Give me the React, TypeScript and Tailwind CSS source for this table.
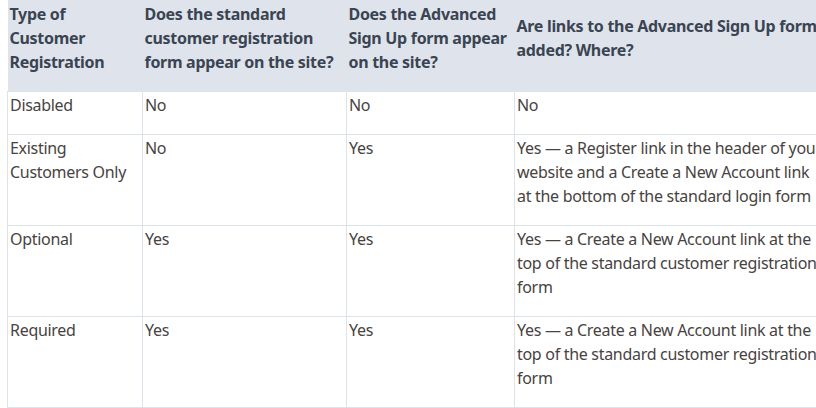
import React from 'react';

const rows = [
  { type: ['Disabled'], standard: 'No', advanced: 'No', links: 'No' },
  {
    type: ['Existing', 'Customers Only'],
    standard: 'No',
    advanced: 'Yes',
    links: 'Yes — a Register link in the header of your website and a Create a New Account link at the bottom of the standard login form',
  },
  {
    type: ['Optional'],
    standard: 'Yes',
    advanced: 'Yes',
    links: 'Yes — a Create a New Account link at the top of the standard customer registration form',
  },
  {
    type: ['Required'],
    standard: 'Yes',
    advanced: 'Yes',
    links: 'Yes — a Create a New Account link at the top of the standard customer registration form',
  },
];

export default function App() {
  return (
    <div className="w-[816px] h-[408px] overflow-hidden bg-white pl-[7px] font-['Noto_Sans',sans-serif] text-[16px] leading-[24px] tracking-[-0.3px]">
      <table className="table-fixed border-collapse w-[816px]">
        <colgroup>
          <col className="w-[135px]" />
          <col className="w-[204px]" />
          <col className="w-[168px]" />
          <col className="w-[309px]" />
        </colgroup>
        <thead>
          <tr className="bg-[#dfe4ec] text-[#3b4452] font-bold text-left align-middle">
            <th className="pl-[2px] pr-0 pt-[2px] pb-[17px]">Type of Customer Registration</th>
            <th className="pl-[2px] pr-0 pt-[2px] pb-[17px]">Does the standard customer registration form appear on the site?</th>
            <th className="pl-[2px] pr-0 pt-[2px] pb-[17px]">Does the Advanced Sign Up form appear on the site?</th>
            <th className="pl-[2px] pr-0 pt-[2px] pb-[17px]">Are links to the Advanced Sign Up form added? Where?</th>
          </tr>
        </thead>
        <tbody className="text-[#47433f]">
          {rows.map((r, i) => (
            <tr key={i} className="align-top">
              <td className="border border-[#dde3ea] pl-[2px] pr-0 pt-[1px] pb-[17px]">
                {r.type.map((t, j) => (
                  <div key={j}>{t}</div>
                ))}
              </td>
              <td className="border border-[#dde3ea] pl-[2px] pr-0 pt-[1px] pb-[17px]">{r.standard}</td>
              <td className="border border-[#dde3ea] pl-[2px] pr-0 pt-[1px] pb-[17px]">{r.advanced}</td>
              <td className="border border-[#dde3ea] pl-[2px] pr-0 pt-[1px] pb-[17px]">{r.links}</td>
            </tr>
          ))}
        </tbody>
      </table>
    </div>
  );
}
